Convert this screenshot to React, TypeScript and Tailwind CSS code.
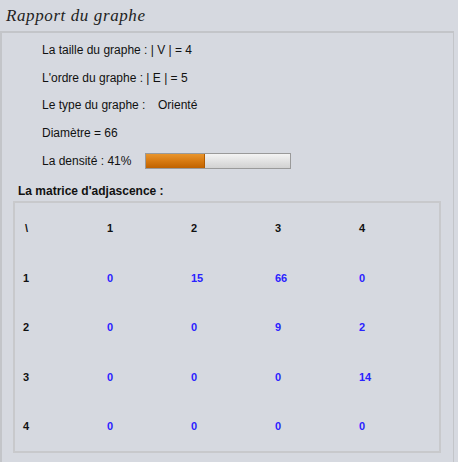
import React from "react";

const matrix = [
  [0, 15, 66, 0],
  [0, 0, 9, 2],
  [0, 0, 0, 14],
  [0, 0, 0, 0],
];

export default function App() {
  const sans = { fontFamily: '"Liberation Sans", Arial, sans-serif' };
  return (
    <div className="w-[458px] h-[462px] bg-[#d6d9e0] overflow-hidden text-[#111]" style={sans}>
      <div className="h-[31px] flex items-center pl-[6px]">
        <span
          className="italic text-[17px] text-[#222] tracking-[0.6px]"
          style={{ fontFamily: '"Liberation Serif", "DejaVu Serif", serif' }}
        >
          Rapport du graphe
        </span>
      </div>
      <div className="w-[454px] h-[431px] border-t-2 border-l-2 border-r border-t-[#c3c5c9] border-l-[#c3c5c9] border-r-[#c3c5c9]">
        <div className="pt-[3px] pl-[40px] text-[12px] flex flex-col">
          <div className="h-[28px] flex items-center">La taille du graphe : | V | = 4</div>
          <div className="h-[27px] flex items-center">L'ordre du graphe : | E | = 5</div>
          <div className="h-[28px] flex items-center">
            <span className="w-[116px]">Le type du graphe :</span>
            <span>Orienté</span>
          </div>
          <div className="h-[27px] flex items-center">Diamètre = 66</div>
          <div className="h-[30px] flex items-center">
            <span className="w-[103px]">La densité : 41%</span>
            <div className="w-[146px] h-[16px] border border-[#9a9a9a] bg-gradient-to-b from-[#f4f4f4] via-[#e2e2e2] to-[#d2d2d2] flex">
              <div className="w-[41%] h-full bg-gradient-to-b from-[#e8952c] via-[#d77a10] to-[#c06200] border-r border-[#b05a00]" />
            </div>
          </div>
        </div>
        <div className="mt-[7px] h-[16px] pl-[16px] flex items-center text-[12px] font-bold">
          La matrice d'adjascence :
        </div>
        <div className="mt-[2px] ml-[11px] w-[428px] h-[252px] border-2 border-[#c8c9cc]">
          <div className="h-full grid grid-cols-[84px_84px_84px_84px_84px] grid-rows-5 pl-[8px] pt-[1px] text-[11px] font-bold">
            <div className="flex items-center pl-[2px]">\</div>
            {[1, 2, 3, 4].map((n) => (
              <div key={"h" + n} className="flex items-center">{n}</div>
            ))}
            {matrix.map((row, i) => (
              <React.Fragment key={i}>
                <div className="flex items-center">{i + 1}</div>
                {row.map((v, j) => (
                  <div key={j} className="flex items-center text-[#2a22ff]">{v}</div>
                ))}
              </React.Fragment>
            ))}
          </div>
        </div>
      </div>
    </div>
  );
}
